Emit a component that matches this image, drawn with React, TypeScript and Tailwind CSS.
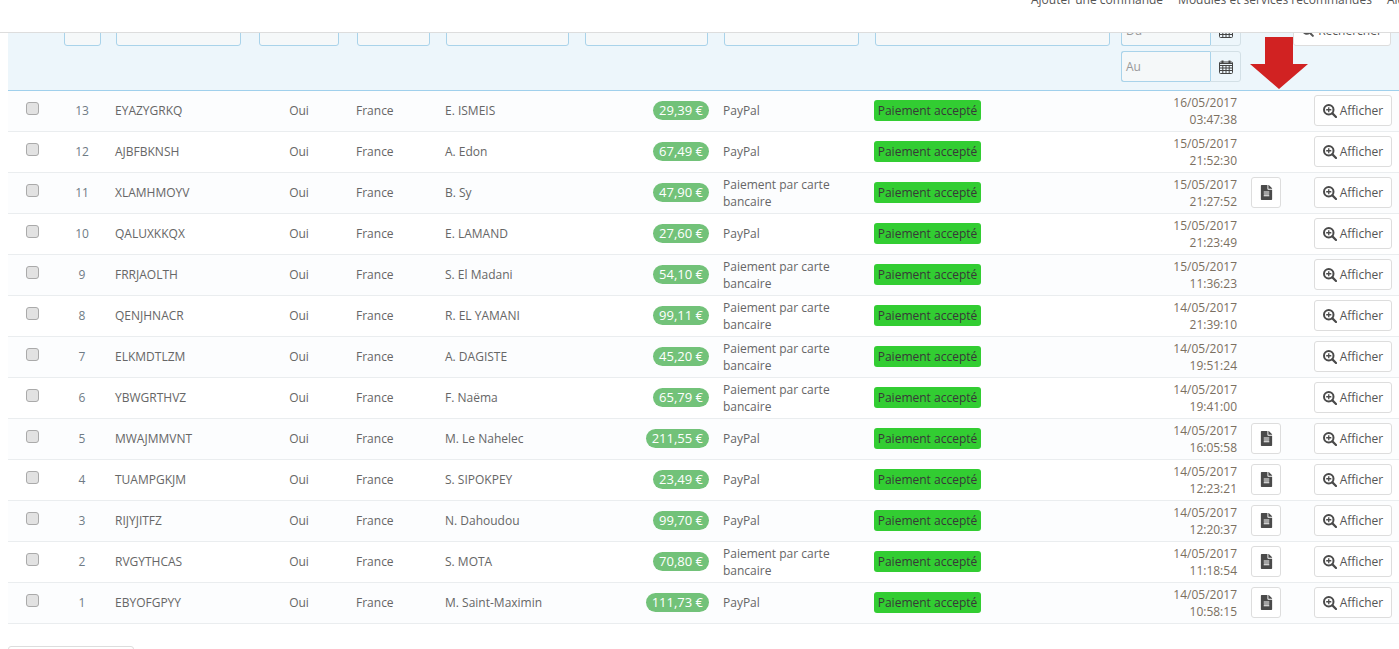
import { FaFileAlt, FaSearch } from "react-icons/fa";

const CARD = "Paiement par carte bancaire";
const COLS = "grid grid-cols-[48px_52px_144px_97px_89px_139px_139px_151px_250px_127px_155px]";

const orders = [
  { id: 13, ref: "EYAZYGRKQ", name: "E. ISMEIS", total: "29,39 €", pay: "PayPal", date: "16/05/2017", time: "03:47:38", pdf: false },
  { id: 12, ref: "AJBFBKNSH", name: "A. Edon", total: "67,49 €", pay: "PayPal", date: "15/05/2017", time: "21:52:30", pdf: false },
  { id: 11, ref: "XLAMHMOYV", name: "B. Sy", total: "47,90 €", pay: CARD, date: "15/05/2017", time: "21:27:52", pdf: true },
  { id: 10, ref: "QALUXKKQX", name: "E. LAMAND", total: "27,60 €", pay: "PayPal", date: "15/05/2017", time: "21:23:49", pdf: false },
  { id: 9, ref: "FRRJAOLTH", name: "S. El Madani", total: "54,10 €", pay: CARD, date: "15/05/2017", time: "11:36:23", pdf: false },
  { id: 8, ref: "QENJHNACR", name: "R. EL YAMANI", total: "99,11 €", pay: CARD, date: "14/05/2017", time: "21:39:10", pdf: false },
  { id: 7, ref: "ELKMDTLZM", name: "A. DAGISTE", total: "45,20 €", pay: CARD, date: "14/05/2017", time: "19:51:24", pdf: false },
  { id: 6, ref: "YBWGRTHVZ", name: "F. Naëma", total: "65,79 €", pay: CARD, date: "14/05/2017", time: "19:41:00", pdf: false },
  { id: 5, ref: "MWAJMMVNT", name: "M. Le Nahelec", total: "211,55 €", pay: "PayPal", date: "14/05/2017", time: "16:05:58", pdf: true },
  { id: 4, ref: "TUAMPGKJM", name: "S. SIPOKPEY", total: "23,49 €", pay: "PayPal", date: "14/05/2017", time: "12:23:21", pdf: true },
  { id: 3, ref: "RIJYJITFZ", name: "N. Dahoudou", total: "99,70 €", pay: "PayPal", date: "14/05/2017", time: "12:20:37", pdf: true },
  { id: 2, ref: "RVGYTHCAS", name: "S. MOTA", total: "70,80 €", pay: CARD, date: "14/05/2017", time: "11:18:54", pdf: true },
  { id: 1, ref: "EBYOFGPYY", name: "M. Saint-Maximin", total: "111,73 €", pay: "PayPal", date: "14/05/2017", time: "10:58:15", pdf: true },
];

function CalendarIcon() {
  return (
    <svg width="14" height="14" viewBox="0 0 14 14" fill="none" stroke="#444" strokeWidth="1">
      <rect x="0.5" y="2" width="13" height="11.5" rx="1" />
      <path d="M0.5 3.5h13M0.5 5.5h13M0.5 8h13M0.5 10.5h13" />
      <path d="M3.8 5.5v8M7 5.5v8M10.2 5.5v8" />
      <path d="M3.5 0.5v3M10.5 0.5v3" strokeWidth="2" />
    </svg>
  );
}

function ZoomIcon() {
  return (
    <svg width="14" height="14" viewBox="0 0 14 14" fill="none" stroke="#4a4a4a">
      <circle cx="5.75" cy="5.75" r="4.75" strokeWidth="2" />
      <path d="M5.75 3.2v5.1M3.2 5.75h5.1" strokeWidth="1.3" />
      <path d="M9.4 9.4l3.6 3.6" strokeWidth="2.2" strokeLinecap="round" />
    </svg>
  );
}

function FilterInput({ className }: { className: string }) {
  return <div className={`h-[31px] rounded-[3px] border border-[#a9d3ea] bg-[#f5f8f9] ${className}`} />;
}

function DateInput({ label }: { label: string }) {
  return (
    <div className="flex h-[31px] rounded-[3px] border border-[#d3e0e6] text-[#999]">
      <span className="-m-px mr-0 flex-1 rounded-l-[3px] border-y border-l border-[#a9d3ea] bg-[#f5f8f9] pl-1 leading-[29px]">{label}</span>
      <span className="flex w-[30px] items-center justify-center border-l border-[#a9d3ea]">
        <CalendarIcon />
      </span>
    </div>
  );
}

function Filters() {
  return (
    <div className="relative ml-2 h-[58px] overflow-hidden border-b border-[#a0d0ec] bg-[#edf6fb]">
      <div className={`${COLS} -mt-[18px]`}>
        <div />
        <FilterInput className="ml-2 mr-[7px]" />
        <FilterInput className="ml-2 mr-[11px]" />
        <FilterInput className="ml-[7px] mr-[10px]" />
        <FilterInput className="ml-2 mr-2" />
        <FilterInput className="ml-2 mr-2" />
        <FilterInput className="ml-2 mr-2" />
        <FilterInput className="ml-2 mr-2" />
        <FilterInput className="ml-2 mr-[7px]" />
        <div className="ml-1 mr-[3px] flex flex-col gap-[5px]">
          <DateInput label="Du" />
          <DateInput label="Au" />
        </div>
        <div className="ml-[49px] mr-2 flex h-[31px] items-center justify-center gap-1 rounded-[3px] border border-[#ddd] bg-white text-[#555]">
          <FaSearch className="size-3" />
          Rechercher
        </div>
      </div>
    </div>
  );
}

function OrderRow({ order }: { order: (typeof orders)[number] }) {
  return (
    <div className={`${COLS} ml-2 h-[41px] items-center border-b border-[#eaedef] odd:bg-[#fcfdfe]`}>
      <div className="flex justify-center pb-1.5">
        <input type="checkbox" className="size-[13px] appearance-none rounded-[3px] border border-[#aaa] bg-[#e2e2e2]" />
      </div>
      <div className="text-center text-[#6f7b85]">{order.id}</div>
      <div className="pl-[7px]">{order.ref}</div>
      <div className="pr-[3px] text-center">Oui</div>
      <div className="pl-[7px]">France</div>
      <div className="pl-[7px]">{order.name}</div>
      <div className="mb-px flex justify-end pr-[7px]">
        <span className="rounded-full bg-[#72c279] px-[6px] text-[13px] leading-[19px] text-white">{order.total}</span>
      </div>
      <div className={`px-[7px] leading-[17px] ${order.pay === CARD ? "" : "-mt-px"}`}>{order.pay}</div>
      <div className="mb-px pl-[7px]">
        <span className="inline-block w-[107px] rounded-[3px] bg-[#32cd32] text-center leading-[21px] text-[#383838]">Paiement accepté</span>
      </div>
      <div className="pr-[7px] text-right leading-[17px] text-[#7b6f5f]">
        <div>{order.date}</div>
        <div>{order.time}</div>
      </div>
      <div className="mb-px flex items-center justify-between px-[7px]">
        {order.pdf ? (
          <span className="flex h-[31px] w-[30px] items-center justify-center rounded-[3px] border border-[#ddd] bg-white text-[#4a4a4a]">
            <FaFileAlt className="size-[15px]" />
          </span>
        ) : (
          <span />
        )}
        <span className="flex h-[31px] w-[78px] items-center justify-center gap-[3px] rounded-[3px] border border-[#ddd] bg-white text-[#555]">
          <ZoomIcon />
          Afficher
        </span>
      </div>
    </div>
  );
}

export default function App() {
  return (
    <div className="relative h-[649px] w-[1399px] overflow-hidden bg-white font-['Open_Sans',sans-serif] text-xs text-[#666]">
      <div className="flex h-[33px] gap-[15px] overflow-hidden whitespace-nowrap border-b border-[#ddd] pl-[1031px] text-[#555]">
        <span className="-mt-[8px]">Ajouter une commande</span>
        <span className="-mt-[8px]">Modules et services recommandés</span>
        <span className="-mt-[8px]">Aide</span>
      </div>
      <Filters />
      {orders.map((order) => (
        <OrderRow key={order.id} order={order} />
      ))}
      <div className="ml-2 mt-[22px] h-8 w-[126px] rounded-[3px] border border-[#ddd] bg-white" />
      <svg className="absolute left-[1250px] top-[37px]" width="58" height="52" viewBox="0 0 58 52">
        <polygon points="15,0 43,0 43,27 58,27 29,52 0,27 15,27" fill="#d12222" />
      </svg>
    </div>
  );
}
